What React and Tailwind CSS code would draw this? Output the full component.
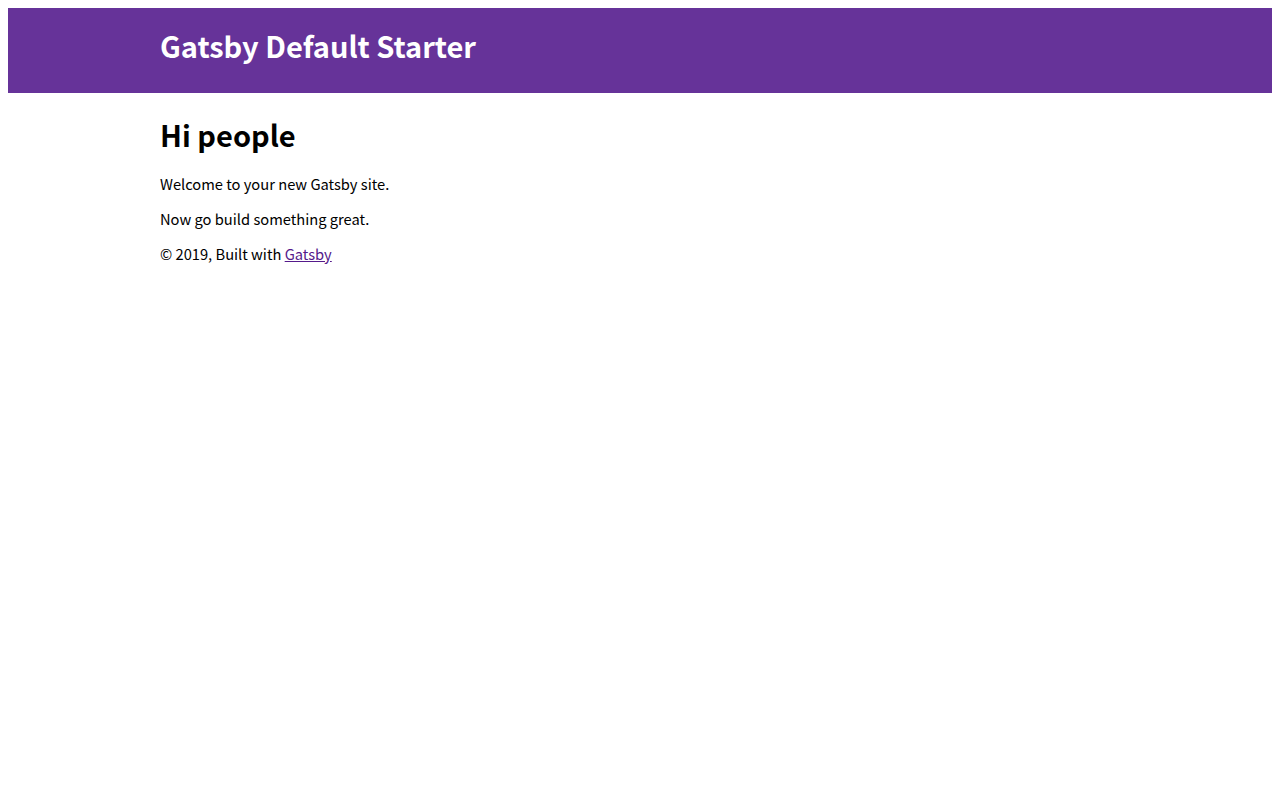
export default function App() {
  return (
    <div className="min-h-screen bg-white p-2 text-black" style={{ fontFamily: '"Noto Sans CJK KR", "Noto Sans", sans-serif' }}>
      {/* Header */}
      <header className="bg-[#663399] h-[85px]">
        <div className="max-w-[960px] mx-auto h-full flex items-center pb-[10px]">
          <h1 className="text-[29px] font-bold text-white leading-none">Gatsby Default Starter</h1>
        </div>
      </header>

      <main className="max-w-[960px] mx-auto pt-[21px]">
        <h2 className="text-[29px] font-bold leading-[40px] mb-[19px]">Hi people</h2>
        <p className="text-[14.7px] leading-[22px] mb-[13px]">Welcome to your new Gatsby site.</p>
        <p className="text-[14.7px] leading-[22px] mb-[13px]">Now go build something great.</p>
        <footer className="text-[14.7px] leading-[22px]">
          © 2019, Built with{' '}
          <a href="#" className="text-[#551a8b] underline">Gatsby</a>
        </footer>
      </main>
    </div>
  )
}
